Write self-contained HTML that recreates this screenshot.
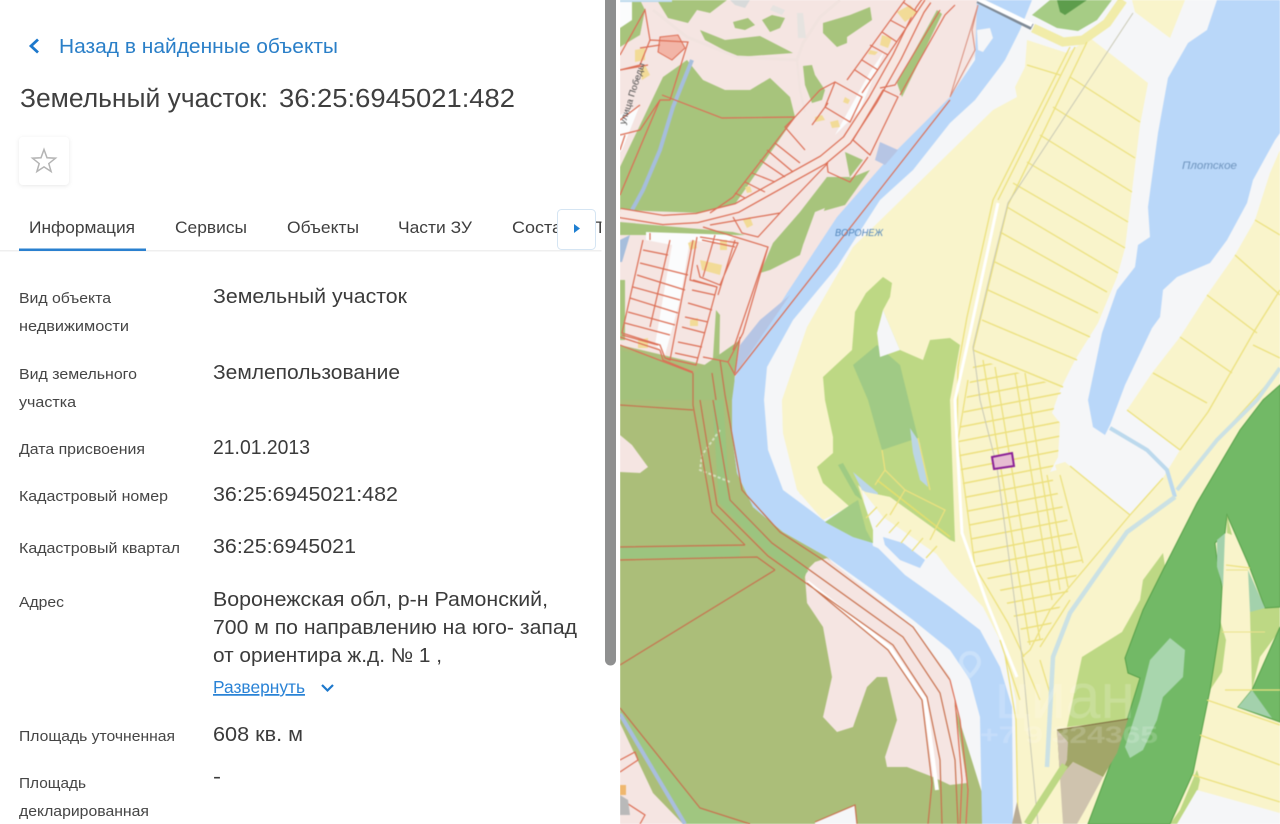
<!DOCTYPE html>
<html lang="ru"><head><meta charset="utf-8"><title>Земельный участок</title>
<style>
html,body{margin:0;padding:0;background:#fff;width:1280px;height:824px;overflow:hidden}
svg{display:block;position:absolute;left:0;top:0}
text{font-family:"Liberation Sans",sans-serif}
.l{font-size:15px;fill:#454545}
.v{font-size:20px;fill:#3b3b3b}
.t{font-size:17px;fill:#3f3f3f}
.r{fill:none;stroke:#dc6e55;stroke-width:1.200}
.b{fill:none;stroke:#c8714e;stroke-width:1.200}
.y{fill:none;stroke:#ece17f;stroke-width:1.300}
</style></head><body>
<svg width="1280" height="824" viewBox="0 0 1280 824" xmlns="http://www.w3.org/2000/svg">
<defs>
<clipPath id="mc"><rect x="620" y="0" width="660" height="824"/></clipPath>
<pattern id="rows" width="200" height="14" patternUnits="userSpaceOnUse" patternTransform="rotate(-11 1000 500)"><rect width="200" height="1.400" fill="#ecdf78"/></pattern>
</defs>
<g clip-path="url(#mc)"><g style="filter:blur(.45px)">
<rect x="620" y="0" width="660" height="824" fill="#f5f6f8"/>
<!-- pink north -->
<polygon fill="#f5e5e2" points="620,0 980,0 975,55 950,100 735,375 728,362 693,373 663,360 620,347"/>
<!-- greens north -->
<polygon fill="#a7c47c" points="663,77 687,60 703,80 725,90 750,90 770,78 790,97 795,117 733,207 703,213 620,210 620,167"/>
<polygon fill="#a7c47c" points="620,0 640,0 645,10 640,35 620,47"/>
<polygon fill="#a7c47c" points="657,0 727,0 710,13 697,10 688,23 668,18"/>
<polygon fill="#a7c47c" points="700,30 725,40 760,36 793,53 737,57 705,40"/>
<polygon fill="#a7c47c" points="733,22 748,18 755,25 745,30 735,28"/>
<polygon fill="#a7c47c" points="762,20 772,15 785,18 780,28 770,32"/>
<polygon fill="#a7c47c" points="823,23 850,15 870,7 872,20 847,37 847,43 837,47 823,33"/>
<polygon fill="#a7c47c" points="803,66 812,65 815,75 825,90 822,100 812,103 805,85"/>
<polygon fill="#a7c47c" points="897,83 937,10 942,14 920,60 902,97"/>
<polygon fill="#a7c47c" points="620,222 733,232 745,235 620,235"/>
<polygon fill="#a7c47c" points="760,273 773,243 800,212 827,177 850,177 863,160 845,152 850,178 870,170 845,205 820,212 803,245 800,255 770,270"/>
<polygon fill="#f5e5e2" points="803,245 815,212 825,208 810,243"/>
<polygon fill="#a7c47c" points="620,280 625,280 625,340 620,340"/>
<polygon fill="#a7c47c" points="620,347 663,360 693,373 712,373 716,310 720,315 719,375 728,362 740,337 735,373 732,400 620,400"/>
<!-- south forest -->
<polygon fill="#abbe79" points="620,345 735,372 732,433 737,473 753,507 783,532 827,557 950,690 982,793 982,824 620,824"/>
<polygon fill="#a3c17b" points="620,350 663,360 693,373 740,340 735,373 732,400 620,400"/>
<polygon fill="#f5e5e2" points="620,435 632,445 648,467 640,473 620,472"/>
<polygon fill="#f5e5e2" points="805,577 807,570 815,562 827,558 913,627 950,677 967,783 950,785 933,777 907,767 887,767 885,757 897,720 887,677 877,677 867,687 853,727 837,732 823,717 832,677 823,627 807,603"/>
<polyline fill="none" stroke="#9cc47f" stroke-width="11" points="620,553 740,552"/>
<polyline fill="none" stroke="#9cc47f" stroke-width="11" points="718,400 724,500 770,548 805,575"/>
<polyline fill="none" stroke="#fff" stroke-width="4" points="807,582 890,648 925,700 937,790"/>
<polygon fill="#a0c680" points="620,708 700,808 750,824 683,824 620,715"/>
<polyline fill="none" stroke="#fff" stroke-opacity=".5" stroke-width="2" stroke-dasharray="3 2" points="720,430 702,455 700,470 730,482"/>
<!-- pink SW corner -->
<polygon fill="#f5e5e2" points="620,723 653,793 683,824 620,824"/>
<polygon fill="#f5f6f8" points="815,822 855,805 857,824 815,824"/>
<polyline fill="none" stroke="#a9bede" stroke-width="4" points="620,714 685,824"/>
<polyline class="r" points="620,760 635,752 638,760 620,772"/><polyline class="r" points="622,800 645,815 640,824"/><polygon fill="#efb76e" points="620,785 626,785 626,795 620,795"/><polygon fill="#b9b9b9" points="620,795 628,800 630,815 620,815"/>
<!-- stream north -->
<polyline fill="none" stroke="#a6bedc" stroke-width="4" points="692,60 673,107 660,150 643,190 632,210"/>
<polygon fill="#a6bedc" points="620,240 630,235 622,262 620,262"/>
<!-- river -->
<polygon fill="#b9d7f9" points="950,97 975,60 977,0 1032,0 1020,30 1005,60 1000,67 975,100 950,123 913,170 880,200 837,267 793,320 767,367 764,400 768,450 783,490 810,510 827,523 873,543 905,575 950,607 980,630 1000,667 1012,707 1013,824 982,824 980,717 970,680 950,650 913,620 873,590 827,557 783,532 753,507 737,473 732,433 732,400 735,377 787,293 837,217 887,160"/>
<polygon fill="#b6c5e4" points="735,375 790,295 760,320 740,345"/>
<polygon fill="#b6c5e4" points="880,142 898,150 885,165 875,160"/>
<polygon fill="#f5f6f8" points="977,30 990,28 993,38 983,52 978,50"/>
<!-- yellow main -->
<polygon fill="#f9f4cb" points="950,152 993,110 1017,97 1015,87 1025,67 1027,40 1067,53 1090,38 1148,83 1140,125 1125,248 1117,277 1098,323 1075,360 1060,390 1052,413 1060,423 1058,457 1050,472 1070,466 1130,515 1163,478 1180,450 1127,410 1152,373 1180,337 1207,295 1235,255 1255,220 1270,173 1280,150 1280,824 1018,824 1016,700 1005,650 983,607 950,572 935,552 885,518 862,500 823,520 797,490 783,433 782,400 807,327 853,247"/>
<polygon fill="#f9f4cb" points="1132,0 1185,0 1170,38 1135,12"/>
<polygon fill="#f5f6f8" points="862,490 883,517 940,560 950,572 952,580 873,546"/>
<!-- lake -->
<polygon fill="#b9d7f9" points="1217,0 1280,0 1280,133 1275,140 1253,180 1247,203 1227,240 1210,263 1177,277 1163,290 1160,317 1152,328 1125,385 1110,425 1105,435 1093,427 1088,400 1102,333 1117,290 1135,267 1138,245 1150,237 1148,207 1158,133 1168,78 1188,43 1207,30"/>
<!-- top road -->
<polyline fill="none" stroke="#f1eca9" stroke-width="9" points="1033,28 1063,42 1083,40 1107,23 1123,0"/>
<polygon fill="#a6cc85" points="1032,15 1050,0 1112,0 1097,20 1078,31 1057,28"/>
<polygon fill="#5d9d4c" points="1057,0 1087,0 1065,15 1060,12"/>
<polyline fill="none" stroke="#7f8a96" stroke-width="6.500" points="978,0 1032,27"/>
<polyline fill="none" stroke="#fff" stroke-width="4.500" points="978,-1 1032,25"/>
<!-- light green -->
<polygon fill="#bdd884" points="883,277 866,293 855,312 852,350 823,377 825,400 833,437 833,453 817,467 823,483 850,507 847,515 825,522 853,537 873,543 873,530 858,485 866,492 890,497 950,540 955,542 950,400 960,345 950,338 930,340 923,360 900,350 883,310 890,297 892,283"/>
<polygon fill="#a0ca85" points="853,365 877,345 900,365 918,438 882,450 868,400"/>
<polygon fill="#a3cc85" points="825,522 853,503 858,500 866,530 873,543 853,537"/>
<polygon fill="#f5f6f8" points="883,310 900,350 880,357 877,333"/>
<polygon fill="#f9f4cb" points="782,400 790,420 824,435 815,465 800,495 783,433"/>
<polygon fill="#9fcb83" points="838,465 843,463 858,490 862,500 855,495"/>
<polygon fill="#bcd6e4" points="910,428 920,443 928,487 920,480 913,453"/>
<polygon fill="#bcd6e8" points="853,472 878,493 877,498 862,490"/>
<polygon fill="#b9d7f9" points="883,537 903,543 925,560 920,568 900,560 885,545"/>
<polygon fill="#f9f4cb" points="866,492 890,497 950,540 950,560 935,553 883,517"/>
<path class="y" d="M877,507L866,518M887,514L876,527M899,522L889,533M911,530L901,543M923,538L912,551M937,546L926,558"/>
<path d="M877,480L950,537" fill="none" stroke="#e2df6e" stroke-width="1.600"/>
<path class="y" stroke="#dfe07a" d="M882,450L885,470L875,485M918,438L930,490M885,470L905,490L945,510L930,540M905,490L890,515"/>
<!-- strip small parcels -->
<polygon fill="url(#rows)" points="975,358 1063,388 1052,413 1060,423 1058,457 1050,472 1083,563 1040,645 1030,647 1000,590 975,567 957,443"/>
<polygon fill="#f9f4cb" points="1055,465 1065,462 1130,515 1085,562"/>
<path class="y" d="M973,350L1063,387M968,380L958,440L975,567L1008,623L1024,657M983,360L1030,645M995,367L1040,640M1015,373L1052,600M1025,373L1060,590M1047,475L1068,587M1060,475L1083,563M1070,466L1130,515M1130,515L1050,610L1030,650L1022,657L1040,700M1040,647L1070,600"/>
<!-- northern parcels -->
<path class="y" d="M1070,77L1140,122M1053,107L1135,158M1040,135L1132,192M1027,162L1128,222M1013,183L1125,248M1007,207L1118,273M1000,232L1107,292M995,262L1098,313M988,290L1090,337M982,320L1077,360M973,350L1063,387M1087,42L1008,205L973,350M1070,47L993,200L967,317L958,367L957,440M1075,47L998,200M1027,65L1060,75M1153,373L1207,403M1180,337L1232,373M1207,295L1257,333M1235,255L1280,295M1255,220L1280,235M1255,330L1208,412M1280,290L1255,330M1253,345L1280,358M1127,410L1180,450M1208,412L1180,450M1280,370L1217,440M1163,478L1130,515"/>
<polyline fill="none" stroke="#c9c9b5" stroke-width="1" points="1133,13 1008,203 993,263 973,347 980,400 997,467 1022,657 1038,824"/>
<polyline fill="none" stroke="#fff" stroke-width="3" points="998,203 970,333 955,400 956,424 962,533 987,603 1017,677"/>
<path class="y" d="M1005,655L1016,720L1018,824M1040,660L1052,700M1000,640L1020,700"/>
<!-- south forest big -->
<polygon fill="#bdd884" points="1163,553 1143,580 1140,600 1122,632 1082,657 1067,727 1127,720 1140,680 1170,600"/>
<polygon fill="#bdd884" points="1220,620 1226,640 1222,672 1210,690"/>
<polygon fill="#bdd884" points="1197,770 1180,810 1170,824 1190,824 1200,780"/>
<polygon fill="#bdd884" points="1265,605 1280,600 1280,630 1260,657 1252,690 1250,612"/>
<polygon fill="#72b966" stroke="#57a049" stroke-width="1" points="1263,400 1240,430 1197,503 1163,570 1143,610 1125,658 1128,673 1140,678 1127,720 1088,824 1170,824 1193,773 1210,690 1220,627 1222,587 1217,560 1215,543 1225,533 1227,515 1248,563 1265,608 1280,607 1280,385"/>
<polygon fill="#72b966" stroke="#57a049" stroke-width="1" points="1280,627 1252,690 1238,707 1280,722"/>
<polygon fill="#a8d6ad" points="1170,638 1185,650 1183,677 1163,697 1157,720 1143,750 1130,758 1125,747 1140,700 1150,660"/>
<polygon fill="#a3d1ac" points="1217,540 1225,533 1223,587 1217,567"/>
<polygon fill="#a3d1ac" points="1248,570 1265,608 1250,612"/>
<polygon fill="#a3d1ac" points="1238,707 1252,690 1272,718"/>
<polygon fill="#bdd884" points="1227,515 1232,535 1227,533"/>
<path d="M1226,570L1248,570M1222,632L1265,632" stroke="#ebe28c" stroke-width="1" fill="none"/>
<!-- brown -->
<polygon fill="#a2a669" points="1057,730 1128,719 1117,753 1103,777 1073,762 1060,777"/>
<polygon fill="#cfc3ae" points="1073,762 1103,777 1085,810 1077,824 1063,824 1060,777"/>
<polygon fill="#cfc3ae" points="1057,730 1068,742 1067,760 1060,777"/>
<path d="M1057,730L1128,719" stroke="#7d6c3e" stroke-width="1" fill="none"/>
<polygon fill="#b9ac95" points="1017,802 1012,824 1022,824"/>
<polyline fill="none" stroke="#bdd884" stroke-width="7" points="1065,765 1027,824"/>
<!-- bottom right -->
<polygon fill="#f5f6f8" points="1197,790 1280,813 1280,824 1177,824"/>
<path class="y" d="M1207,700L1280,725M1200,735L1280,765M1193,775L1280,802M1225,690L1280,690M1226,565L1250,568"/>
<!-- stream -->
<polyline fill="none" stroke="#bcd9ed" stroke-width="4" points="1110,428 1147,450 1167,470 1175,497"/>
<polyline fill="none" stroke="#cbe1e4" stroke-width="4.500" points="1175,497 1127,532 1100,570 1070,613 1053,657 1047,767"/>
<polyline fill="none" stroke="#cbe1e4" stroke-width="4" points="1177,490 1217,440 1257,400 1280,368"/>
<!-- road north -->
<polyline fill="none" stroke="#dc6e55" stroke-width="10.500" points="620,213 663,220 697,218 737,208 787,180 823,160 847,140 873,100 897,57 920,10 927,0"/>
<polyline fill="none" stroke="#f7e7e2" stroke-width="8" points="620,213 663,220 697,218 737,208 787,180 823,160 847,140 873,100 897,57 920,10 927,0"/>
<polyline fill="none" stroke="#f1e3df" stroke-width="3" points="653,10 687,37 737,57 797,60 803,43 820,17 840,0"/>
<polyline fill="none" stroke="#f1e3df" stroke-width="2" points="797,60 800,90 805,112"/>
<polygon fill="#fbfcfd" points="835,135 870,72 885,50 860,110"/>
<polygon fill="#fbfcfd" points="620,0 632,0 632,20 620,28"/><rect x="620" y="0" width="52" height="2" fill="#bcd9ed"/>
<polygon fill="#fbfcfd" points="646,232 735,235 725,245 690,240 680,300 665,355 655,345 672,245 646,240"/>
<polygon fill="#fbfcfd" points="620,115 640,105 622,150 620,152"/>
<!-- buildings -->
<g fill="#f2db97"><polygon points="897,12 910,5 917,13 905,22"/><polygon points="882,35 892,38 888,48 880,45"/><polygon points="870,50 878,52 875,55 868,54"/><polygon points="845,97 850,100 848,104 843,102"/><polygon points="815,117 822,115 825,120 815,122"/><polygon points="830,122 838,120 840,127 832,128"/><polygon points="745,187 750,186 752,192 747,193"/><polygon points="743,220 750,217 753,225 747,228"/><polygon points="688,243 695,240 697,248 690,250"/><polygon points="720,240 727,240 727,250 720,250"/><polygon points="700,260 722,265 720,275 702,270"/><polygon points="690,320 698,318 698,326 690,326"/><polygon points="638,340 648,338 648,348 638,348"/><polygon points="640,70 645,65 650,75 642,80"/><polygon points="635,50 645,48 645,60 635,62"/></g>
<polygon fill="#f2b5a7" stroke="#dc6e55" points="660,37 678,35 685,48 672,60 658,52"/>
<polygon fill="#d8dada" points="730,0 750,0 745,8 735,5"/><polygon fill="#e6e3e0" points="773,5 785,10 782,15 770,10"/><polygon fill="#e6e3e0" points="797,13 803,13 806,38 798,38"/>
<!-- red lines north -->
<path class="r" d="M662,95L722,118L795,117L733,197L710,213M775,143L800,163M767,150L793,172M760,160L785,177M752,173L775,182M745,182L765,192M735,193L745,198M795,117L785,127L805,150"/>
<path class="r" d="M835,82L862,97L850,122L825,107ZM847,80L905,0M862,93L917,12L925,0M855,70L870,80M862,60L878,70M870,45L888,55M882,32L897,42M890,20L905,28M903,2L917,12M835,82L820,90L795,117M828,103L812,125"/>
<path class="r" d="M853,140L870,155L898,97L883,90ZM827,163L828,172L850,182L868,157M733,217L742,233L758,237L780,213L828,163M703,227L768,247L743,333L728,362L703,357M733,350L768,247M710,225L780,213M940,10L895,85L880,88M950,100L735,375L728,362M740,337L735,373M955,5L945,15L900,95"/>
<path class="r" d="M620,55L645,10L650,40L640,65L620,70M650,40L688,42L670,100L660,100L640,130L620,135M620,70L648,65M640,48L660,45M620,120L640,105M620,150L625,135M620,195L660,100"/>
<!-- south-west parcels -->
<path class="r" d="M643,240L622,333L660,345L665,358L670,360L693,240M670,240L650,327M650,233L650,240M643,250L668,255M640,263L688,275M637,275L685,290M633,287L680,300M630,298L678,313M628,312L675,325M625,323L670,335M622,335L658,345M697,237L690,280L717,287L696,365L665,358M693,280L717,287M692,290L715,295M688,303L712,310M685,317L708,322M682,327L705,333M678,342L702,347M675,353L698,358M700,237L738,243L720,285L700,277L697,265M702,240L735,247M715,235L703,277M735,240L718,295M620,345L693,373M620,337L660,350M660,350L663,360L693,372"/>
<path class="b" d="M725,395L742,490L780,532L823,560L913,627L950,680M713,400L730,500L772,543L903,637L940,693L955,760L958,824M700,400L717,505L768,556L893,645L927,697L940,760L942,824M693,405L712,512L745,545M807,583L888,650L922,700L932,783L928,824M620,405L693,410M620,547L745,545M620,560L757,557L775,570M620,665L775,570M620,708L700,808L750,824M815,822L855,805L857,824M693,373L693,405M712,373L716,400M720,360L725,395"/>
<polyline class="r" points="950,680 960,720 968,790 966,824"/><polyline class="r" points="955,700 962,780 960,824"/>
<polygon fill="none" stroke="#d98c7a" stroke-width="1" points="950,97 975,50 972,30 978,5"/>
<!-- target -->
<polygon fill="#e7bdd2" stroke="#8a1f96" stroke-width="2" points="992,457 1012,453 1014,466 994,469"/>
<!-- labels -->
<text x="835" y="236" font-size="10" font-style="italic" fill="#4f84ba" textLength="48" lengthAdjust="spacingAndGlyphs">ВОРОНЕЖ</text>
<text x="1182" y="169" font-size="11" font-style="italic" fill="#6d93bd" textLength="55" lengthAdjust="spacingAndGlyphs">Плотское</text>
<text transform="translate(625 125) rotate(-72)" font-size="9" fill="#4a4a4a" textLength="64" lengthAdjust="spacingAndGlyphs">улица Победы</text>
<g fill="#fff">
<text x="995" y="718" font-size="64" opacity=".17" textLength="140" lengthAdjust="spacingAndGlyphs">циан</text>
<text x="980" y="743" font-size="24" font-weight="bold" opacity=".17" textLength="178" lengthAdjust="spacingAndGlyphs">+7 9 324365</text>
</g>
<path d="M970,653c-6,0-9,5-9,9 0,6 9,14 9,14s9-8 9-14c0-4-3-9-9-9z" fill="none" stroke="#fff" stroke-opacity=".25" stroke-width="4"/>
</g></g>

<!-- panel -->
<rect x="0" y="0" width="620" height="824" fill="#fff"/>
<path d="M605,0H616V660a5.500,5.500 0 0 1-11,0Z" fill="#8f9090"/>
<path d="M38,39.500L31,46L38,52.500" fill="none" stroke="#1d78cc" stroke-width="2.800"/>
<text x="59" y="53" font-size="20" fill="#2a7fc8" textLength="279" lengthAdjust="spacingAndGlyphs">Назад в найденные объекты</text>
<text x="20" y="107" font-size="25.500" fill="#3f3f3f" textLength="248" lengthAdjust="spacingAndGlyphs">Земельный участок:</text>
<text x="279" y="107" font-size="25.500" fill="#3f3f3f" textLength="236" lengthAdjust="spacingAndGlyphs">36:25:6945021:482</text>
<rect x="19" y="137" width="50" height="48" rx="4" fill="#fff" style="filter:drop-shadow(0 1px 2px rgba(0,0,0,.09))"/>
<path d="M44,149.500L47,157.800L55.500,158.200L48.800,163.600L51.100,171.500L44,166.900L36.900,171.500L39.200,163.600L32.500,158.200L41,157.800Z" fill="none" stroke="#b4b4b4" stroke-width="1.500"/>
<rect x="0" y="250" width="604" height="1.500" fill="#efefef"/>
<rect x="19" y="248.500" width="127" height="2.500" fill="#2a80cf"/>
<text class="t" x="29" y="233" textLength="106" lengthAdjust="spacingAndGlyphs">Информация</text>
<text class="t" x="175" y="233" textLength="72" lengthAdjust="spacingAndGlyphs">Сервисы</text>
<text class="t" x="287" y="233" textLength="72" lengthAdjust="spacingAndGlyphs">Объекты</text>
<text class="t" x="398" y="233" textLength="74" lengthAdjust="spacingAndGlyphs">Части ЗУ</text>
<text class="t" x="512" y="233" textLength="50" lengthAdjust="spacingAndGlyphs">Соста</text>
<text class="t" x="595" y="233">Т</text>
<rect x="601.500" y="205" width="3.500" height="50" fill="#fff"/>
<rect x="557.500" y="209.500" width="38" height="40" rx="4" fill="#fff" stroke="#d5e5f3"/>
<path d="M574,224L580,228.500L574,233Z" fill="#1f7fd1"/>
<text class="l" x="19" y="303" textLength="92" lengthAdjust="spacingAndGlyphs">Вид объекта</text>
<text class="l" x="19" y="331" textLength="110" lengthAdjust="spacingAndGlyphs">недвижимости</text>
<text class="v" x="213" y="303" textLength="194" lengthAdjust="spacingAndGlyphs">Земельный участок</text>
<text class="l" x="19" y="379" textLength="118" lengthAdjust="spacingAndGlyphs">Вид земельного</text>
<text class="l" x="19" y="407" textLength="57" lengthAdjust="spacingAndGlyphs">участка</text>
<text class="v" x="213" y="379" textLength="187" lengthAdjust="spacingAndGlyphs">Землепользование</text>
<text class="l" x="19" y="454" textLength="126" lengthAdjust="spacingAndGlyphs">Дата присвоения</text>
<text class="v" x="213" y="454" textLength="97" lengthAdjust="spacingAndGlyphs">21.01.2013</text>
<text class="l" x="19" y="501" textLength="149" lengthAdjust="spacingAndGlyphs">Кадастровый номер</text>
<text class="v" x="213" y="501" textLength="185" lengthAdjust="spacingAndGlyphs">36:25:6945021:482</text>
<text class="l" x="19" y="553" textLength="161" lengthAdjust="spacingAndGlyphs">Кадастровый квартал</text>
<text class="v" x="213" y="553" textLength="143" lengthAdjust="spacingAndGlyphs">36:25:6945021</text>
<text class="l" x="19" y="607" textLength="45" lengthAdjust="spacingAndGlyphs">Адрес</text>
<text class="v" x="213" y="606" textLength="335" lengthAdjust="spacingAndGlyphs">Воронежская обл, р-н Рамонский,</text>
<text class="v" x="213" y="634" textLength="364" lengthAdjust="spacingAndGlyphs">700 м по направлению на юго- запад</text>
<text class="v" x="213" y="662" textLength="229" lengthAdjust="spacingAndGlyphs">от ориентира ж.д. № 1 ,</text>
<text x="213" y="693" font-size="17.500" fill="#2a83d6" text-decoration="underline" textLength="92" lengthAdjust="spacingAndGlyphs">Развернуть</text>
<path d="M322,685L327.500,690.500L333,685" fill="none" stroke="#1d78cc" stroke-width="2.200"/>
<text class="l" x="19" y="741" textLength="156" lengthAdjust="spacingAndGlyphs">Площадь уточненная</text>
<text class="v" x="213" y="741" textLength="90" lengthAdjust="spacingAndGlyphs">608 кв. м</text>
<text class="l" x="19" y="788" textLength="67" lengthAdjust="spacingAndGlyphs">Площадь</text>
<text class="l" x="19" y="816" textLength="130" lengthAdjust="spacingAndGlyphs">декларированная</text>
<text class="v" x="213" y="783" textLength="8" lengthAdjust="spacingAndGlyphs">-</text>
</svg>
</body></html>
